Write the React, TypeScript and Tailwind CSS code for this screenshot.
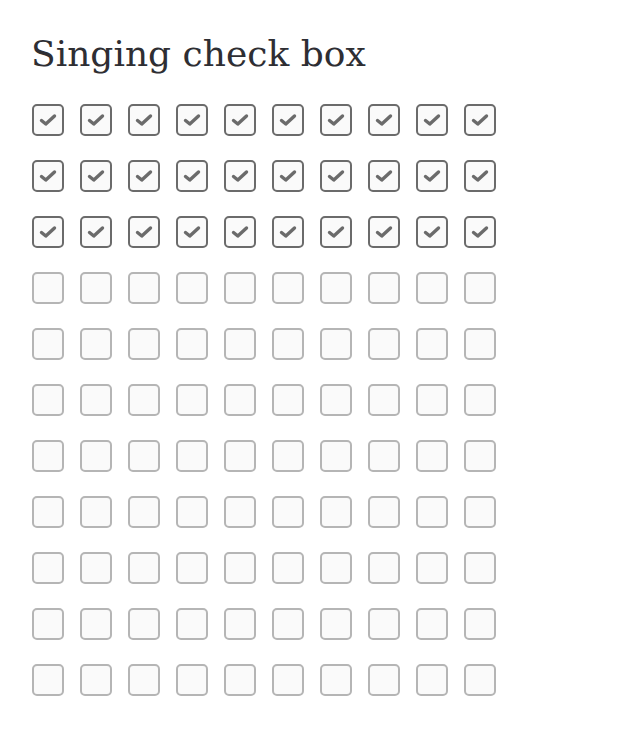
import React from "react";

function Box({ checked }: { checked: boolean }) {
  return (
    <div
      className={
        "w-8 h-8 rounded-[5px] border-2 bg-[#fafafa] flex items-center justify-center " +
        (checked ? "border-[#6b6b6b]" : "border-[#b5b5b5]")
      }
    >
      {checked && (
        <svg width="18" height="14" viewBox="0 0 18 14">
          <path
            d="M2.5 7.5 L6.8 11 L15.5 3"
            fill="none"
            stroke="#6b6b6b"
            strokeWidth="3.4"
            strokeLinecap="round"
            strokeLinejoin="round"
          />
        </svg>
      )}
    </div>
  );
}

export default function App() {
  const rows = Array.from({ length: 11 }, (_, r) => r);
  const cols = Array.from({ length: 10 }, (_, c) => c);
  return (
    <div className="w-[640px] h-[736px] bg-white pl-[32px] pt-[28px]">
      <h1
        className="text-[36px] leading-[48px] text-[#2e2e33] pt-[2px] mb-[26px] -ml-[1px]"
        style={{ fontFamily: '"DejaVu Serif", "Liberation Serif", serif' }}
      >
        Singing check box
      </h1>
      <div className="flex flex-col gap-6">
        {rows.map((r) => (
          <div key={r} className="flex gap-4">
            {cols.map((c) => (
              <Box key={c} checked={r < 3} />
            ))}
          </div>
        ))}
      </div>
    </div>
  );
}
